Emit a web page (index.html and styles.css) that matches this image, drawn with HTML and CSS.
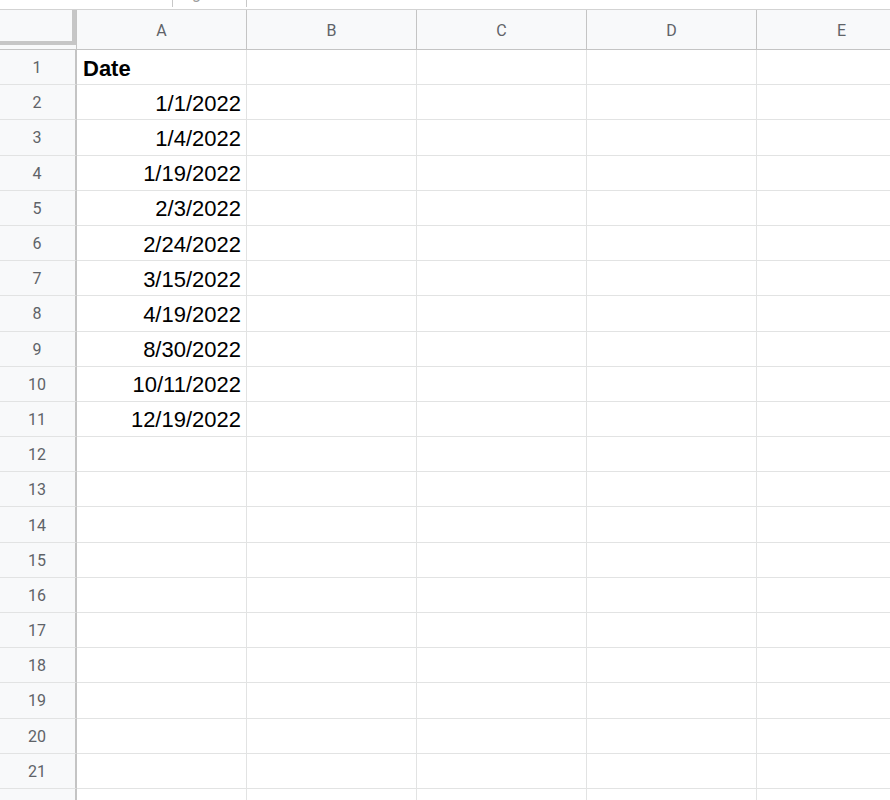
FILE: index.html
```html
<!DOCTYPE html>
<html>
<head>
<meta charset="utf-8">
<link rel="stylesheet" href="styles.css">
</head>
<body>
<div class="page">
  <div class="topstrip">
    <span class="tick tick-a"></span>
    <span class="frag"><span class="frag-g">g</span></span>
    <span class="tick tick-b"></span>
  </div>
  <div class="sheet">
    <div class="corner"><div class="corner-inner"></div></div>
    <div class="colhead">A</div>
    <div class="colhead">B</div>
    <div class="colhead">C</div>
    <div class="colhead">D</div>
    <div class="colhead">E</div>

    <div class="rowhead">1</div><div class="cell bold">Date</div><div class="cell"></div><div class="cell"></div><div class="cell"></div><div class="cell"></div>
    <div class="rowhead">2</div><div class="cell num">1/1/2022</div><div class="cell"></div><div class="cell"></div><div class="cell"></div><div class="cell"></div>
    <div class="rowhead">3</div><div class="cell num">1/4/2022</div><div class="cell"></div><div class="cell"></div><div class="cell"></div><div class="cell"></div>
    <div class="rowhead">4</div><div class="cell num">1/19/2022</div><div class="cell"></div><div class="cell"></div><div class="cell"></div><div class="cell"></div>
    <div class="rowhead">5</div><div class="cell num">2/3/2022</div><div class="cell"></div><div class="cell"></div><div class="cell"></div><div class="cell"></div>
    <div class="rowhead">6</div><div class="cell num">2/24/2022</div><div class="cell"></div><div class="cell"></div><div class="cell"></div><div class="cell"></div>
    <div class="rowhead">7</div><div class="cell num">3/15/2022</div><div class="cell"></div><div class="cell"></div><div class="cell"></div><div class="cell"></div>
    <div class="rowhead">8</div><div class="cell num">4/19/2022</div><div class="cell"></div><div class="cell"></div><div class="cell"></div><div class="cell"></div>
    <div class="rowhead">9</div><div class="cell num">8/30/2022</div><div class="cell"></div><div class="cell"></div><div class="cell"></div><div class="cell"></div>
    <div class="rowhead">10</div><div class="cell num">10/11/2022</div><div class="cell"></div><div class="cell"></div><div class="cell"></div><div class="cell"></div>
    <div class="rowhead">11</div><div class="cell num">12/19/2022</div><div class="cell"></div><div class="cell"></div><div class="cell"></div><div class="cell"></div>
    <div class="rowhead">12</div><div class="cell"></div><div class="cell"></div><div class="cell"></div><div class="cell"></div><div class="cell"></div>
    <div class="rowhead">13</div><div class="cell"></div><div class="cell"></div><div class="cell"></div><div class="cell"></div><div class="cell"></div>
    <div class="rowhead">14</div><div class="cell"></div><div class="cell"></div><div class="cell"></div><div class="cell"></div><div class="cell"></div>
    <div class="rowhead">15</div><div class="cell"></div><div class="cell"></div><div class="cell"></div><div class="cell"></div><div class="cell"></div>
    <div class="rowhead">16</div><div class="cell"></div><div class="cell"></div><div class="cell"></div><div class="cell"></div><div class="cell"></div>
    <div class="rowhead">17</div><div class="cell"></div><div class="cell"></div><div class="cell"></div><div class="cell"></div><div class="cell"></div>
    <div class="rowhead">18</div><div class="cell"></div><div class="cell"></div><div class="cell"></div><div class="cell"></div><div class="cell"></div>
    <div class="rowhead">19</div><div class="cell"></div><div class="cell"></div><div class="cell"></div><div class="cell"></div><div class="cell"></div>
    <div class="rowhead">20</div><div class="cell"></div><div class="cell"></div><div class="cell"></div><div class="cell"></div><div class="cell"></div>
    <div class="rowhead">21</div><div class="cell"></div><div class="cell"></div><div class="cell"></div><div class="cell"></div><div class="cell"></div>
    <div class="rowhead">22</div><div class="cell"></div><div class="cell"></div><div class="cell"></div><div class="cell"></div><div class="cell"></div>
  </div>
</div>
</body>
</html>
```

FILE: styles.css
```css
html, body {
  margin: 0;
  padding: 0;
  background: #ffffff;
  overflow: hidden;
}

.page {
  width: 890px;
  height: 800px;
  overflow: hidden;
}

.topstrip {
  position: relative;
  height: 9px;
  border-bottom: 1px solid #d3d3d3;
  background: #ffffff;
}

.tick {
  position: absolute;
  top: 0;
  width: 1px;
  height: 7px;
  background: #c8c8c8;
}

.tick-a { left: 172px; }
.tick-b { left: 246px; }

.frag {
  position: absolute;
  left: 192px;
  top: 0;
  width: 10px;
  height: 6px;
  overflow: hidden;
}

.frag-g {
  position: absolute;
  left: 0;
  top: -16px;
  font-family: Roboto, "Liberation Sans", sans-serif;
  font-size: 16px;
  line-height: 20px;
  color: #9a9a9a;
}

.sheet {
  display: grid;
  grid-template-columns: 77px repeat(5, 170px);
  grid-template-rows: 40px;
  grid-auto-rows: 35.2px;
  width: 927px;
}

.corner {
  box-sizing: border-box;
  background: #f8f9fa;
  border-right: 1px solid #c4c4c4;
  border-bottom: 1px solid #c4c4c4;
}

.corner-inner {
  box-sizing: border-box;
  width: 76px;
  height: 35px;
  border-right: 4px solid #c6c6c6;
  border-bottom: 4px solid #c6c6c6;
}

.colhead {
  box-sizing: border-box;
  background: #f8f9fa;
  border-right: 1px solid #c4c4c4;
  border-bottom: 1px solid #c4c4c4;
  display: flex;
  align-items: center;
  justify-content: center;
  font-family: Roboto, "Liberation Sans", sans-serif;
  font-size: 16px;
  color: #5f6368;
  padding-top: 1px;
}

.rowhead {
  box-sizing: border-box;
  background: #f8f9fa;
  border-right: 2px solid #c4c4c4;
  border-bottom: 1px solid #e2e3e3;
  display: flex;
  align-items: center;
  justify-content: center;
  font-family: Roboto, "Liberation Sans", sans-serif;
  font-size: 16px;
  color: #5f6368;
  padding-right: 1px;
  padding-top: 1px;
}

.cell {
  box-sizing: border-box;
  border-right: 1px solid #e2e3e3;
  border-bottom: 1px solid #e2e3e3;
  display: flex;
  align-items: center;
  font-family: "Liberation Sans", Arial, sans-serif;
  font-size: 22px;
  color: #000000;
  padding: 3px 6px 0 6px;
  white-space: nowrap;
}

.cell.num {
  justify-content: flex-end;
  padding-right: 5px;
}

.cell.bold {
  font-weight: bold;
}
```
